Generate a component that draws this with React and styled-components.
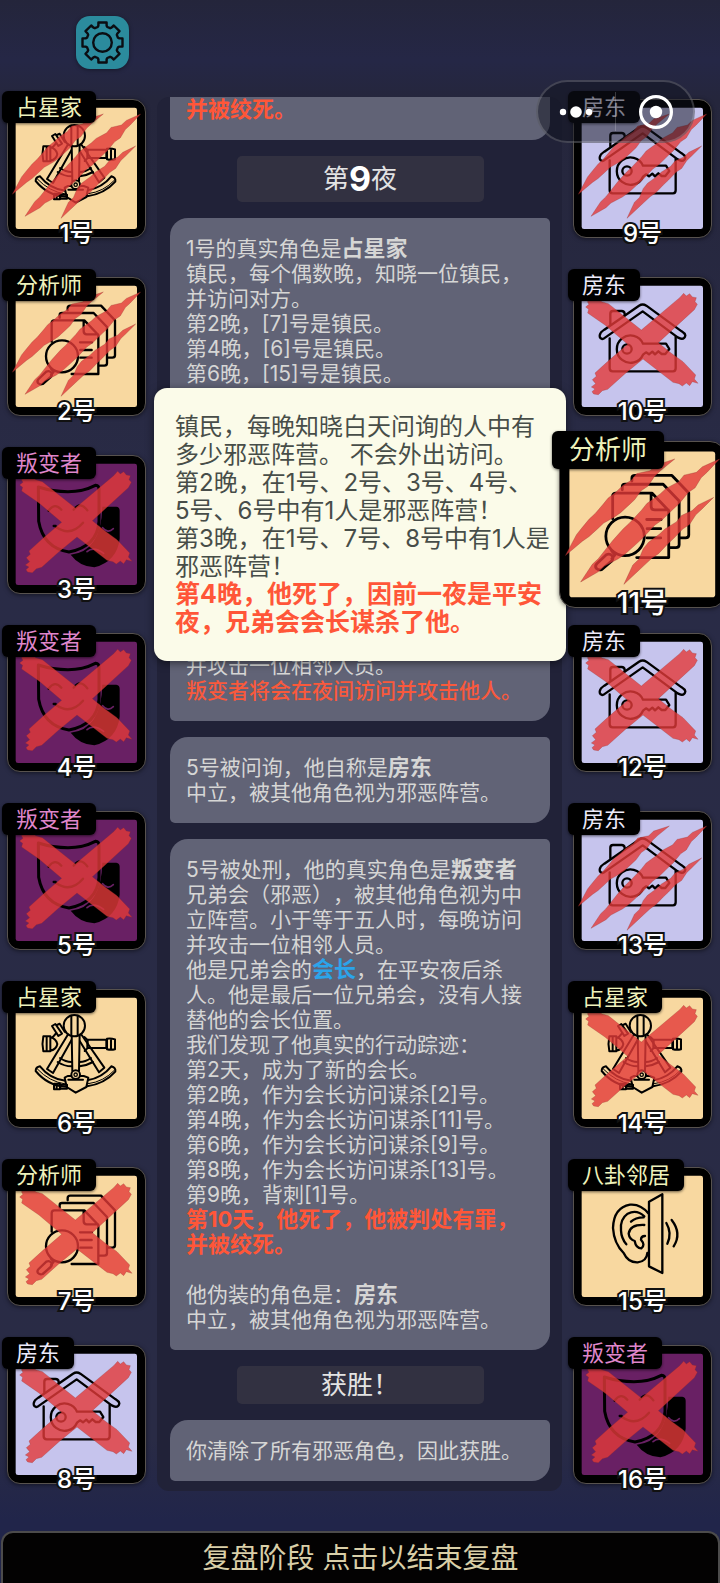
import React from "react";
import styled, { createGlobalStyle } from "styled-components";

const GlobalStyle = createGlobalStyle`
  * { box-sizing: border-box; }
  body {
    margin: 0;
    background: #25273f;
    font-family: Inter, "Noto Sans CJK SC", sans-serif;
    text-spacing-trim: space-all;
  }
  button { font: inherit; color: inherit; border: 0; padding: 0; cursor: pointer; }
`;

const Page = styled.div`
  position: relative;
  display: flex;
  flex-direction: column;
  min-height: 100vh;
  overflow: hidden;
  background: linear-gradient(#24253b 0, #252746 60px, #25263c 100px, #292b46 500px, #292b45 1440px, #21254a 1520px);
`;

const TopBar = styled.header`
  display: flex;
  height: 97px;
  padding: 16px 76px;
`;

const SettingsButton = styled.button`
  width: 53px;
  height: 53px;
  border-radius: 14px;
  background: #2b8b9d;
  box-shadow: 0 1px 4px rgba(0, 0, 0, 0.4);
  svg { display: block; }
`;

const Capsule = styled.div`
  position: absolute;
  z-index: 5;
  top: 80px;
  right: 25px;
  display: flex;
  width: 159px;
  height: 63px;
  border: 2px solid rgba(255, 255, 255, 0.18);
  border-radius: 32px;
  background: rgba(16, 18, 30, 0.5);
`;

const CapsuleButton = styled.button`
  flex: 1;
  display: flex;
  align-items: center;
  justify-content: center;
  background: none;
`;

const CapsuleDivider = styled.span`
  width: 1px;
  margin: 10px 0;
  background: rgba(255, 255, 255, 0.2);
`;

const Board = styled.main`
  flex: 1;
  display: grid;
  grid-template-columns: 139px minmax(0, 1fr) 139px;
  align-items: start;
  column-gap: 11px;
  padding: 0 8px 38px 7px;
`;

const PlayerColumn = styled.ul`
  display: flex;
  flex-direction: column;
  gap: 39px;
  margin: 2px 0 0;
  padding: 0;
  list-style: none;
`;

const PlayerSlot = styled.li`
  position: relative;
  z-index: ${(p) => (p.$selected ? 4 : 1)};
  height: 139px;
`;

const PlayerCard = styled.button`
  position: relative;
  display: block;
  width: ${(p) => (p.$selected ? 167 : 139)}px;
  height: ${(p) => (p.$selected ? 167 : 139)}px;
  margin: ${(p) => (p.$selected ? "-14px" : "0")};
  border: 1px solid #57524e;
  border-radius: ${(p) => (p.$selected ? 16 : 13)}px;
  background: #000;
  box-shadow: 0 1px 4px rgba(0, 0, 0, 0.5);
  svg {
    position: absolute;
    inset: -1px;
    width: calc(100% + 2px);
    height: calc(100% + 2px);
    overflow: visible;
  }
`;

const RoleTag = styled.span`
  position: absolute;
  top: ${(p) => (p.$selected ? -11 : -9)}px;
  left: ${(p) => (p.$selected ? -8 : -6)}px;
  padding: 0 ${(p) => (p.$selected ? 17 : 14)}px;
  border-radius: 6px;
  background: #000;
  box-shadow: 0 1px 3px rgba(0, 0, 0, 0.6);
  color: ${(p) => p.$color};
  font-size: ${(p) => (p.$selected ? 26 : 22)}px;
  line-height: ${(p) => (p.$selected ? 38 : 32)}px;
  white-space: nowrap;
`;

const SeatNumber = styled.span`
  position: absolute;
  right: 0;
  bottom: ${(p) => (p.$selected ? -12 : -13)}px;
  left: 0;
  color: #fff;
  font-size: ${(p) => (p.$selected ? 28 : 24)}px;
  font-weight: 500;
  line-height: 32px;
  text-align: center;
  -webkit-text-stroke: 4px #111;
  paint-order: stroke fill;
`;

const Center = styled.section`
  position: relative;
  z-index: 2;
  min-width: 0;
`;

const Log = styled.div`
  display: flex;
  flex-direction: column;
  align-items: stretch;
  gap: 16px;
  overflow: hidden;
  padding: 0 12px 10px 13px;
  border-radius: 12px;
  background: #212238;
`;

const LogCard = styled.article`
  margin: 0;
  padding: 18px 0 18px 16px;
  border-radius: 18px 5px;
  background: #616376;
  color: #d6d6d5;
  font-size: 21px;
  line-height: 25px;
  white-space: pre-line;
`;

const ScrolledCard = styled(LogCard)`
  padding-top: 0;
  border-radius: 0 0 18px 5px;
`;

const CoveredTopCard = styled(LogCard)`
  display: flex;
  flex-direction: column;
  justify-content: flex-end;
  min-height: 188px;
`;

const CoveredBottomCard = styled(LogCard)`
  min-height: 299px;
`;

const Banner = styled.h2`
  align-self: center;
  width: 65%;
  margin: 0;
  border-radius: 5px;
  background: #323141;
  color: #e3e3e3;
  font-size: 26px;
  font-weight: 400;
  line-height: 38px;
  text-align: center;
`;

const NightBanner = styled(Banner)`
  line-height: 46px;
`;

const NightNumber = styled.strong`
  color: #fff;
  font-size: 34px;
  font-weight: 700;
  line-height: 32px;
  vertical-align: -3px;
`;

const Strong = styled.strong`
  color: ${(p) => p.$color || "inherit"};
  font-size: ${(p) => p.$size || 22}px;
  font-weight: 700;
  line-height: 24px;
`;

const Warning = styled.span`
  color: #f9593c;
  font-weight: 500;
`;

const Popup = styled.aside`
  position: absolute;
  z-index: 3;
  top: 291px;
  right: -4px;
  left: -3px;
  padding: 25px 0 24px 21px;
  border-radius: 13px;
  background: #fbfbe9;
  box-shadow: 0 2px 8px rgba(0, 0, 0, 0.5);
  color: #474d48;
  font-size: 24px;
  line-height: 28px;
  white-space: pre-line;
`;

const FinishButton = styled.button`
  height: 52px;
  margin-left: 1px;
  border: 2px solid #4c4b4b;
  border-bottom: 0;
  border-radius: 12px 12px 0 0;
  background: #030202;
  color: #d9cfa8;
  font-size: 28px;
  line-height: 46px;
`;

const RED = "#ff5638";

/* Artwork is drawn on a 417-unit square that spans the whole card frame. */

function Sextant() {
  return (
    <g transform="translate(-22 4)" strokeWidth="6">
      <path d="M204 134 142 236l18 12 56-100M246 134l68 98-16 14-58-94" />
      <path d="M181 203q17 12 35 12M174 215q20 13 42 13M240 215q17 0 34-12M240 228q20-2 40-13" />
      <path fill="#f8d8a0" d="M216 130h24l-2 112h-20z" />
      <circle cx="224" cy="106" r="32" fill="#f8d8a0" />
      <path d="M215 76v58M234 76v58" />
      <path d="M121 228q-13 2-13 14 36 44 90 47M121 228q30 38 76 43" />
      <path strokeWidth="3" d="M113 236q36 38 84 45M344 240q-32 34-78 40" />
      <path d="M335 228q14 4 12 16-33 37-85 44M335 228q-27 34-72 42" />
      <path fill="#f8d8a0" d="M204 257h48l14 5-6 28-32 17-27-17-6-28z" />
      <path d="M206 268h44" />
      <circle cx="228" cy="253" r="13" fill="#f8d8a0" />
      <circle cx="228" cy="253" r="5" strokeWidth="4" />
      <path d="M264 148h56v25h-56zM322 145q12-2 24 2v30q-12 3-24 0zM334 146v32M254 140l9 8v26l-8 8" />
      <path d="M131 138h21v45h-21q-5-22 0-45zM141 140v42M153 141q15 3 20 20-3 16-20 20M158 142l12-14" />
      <path d="m157 107 10-6 20 29-11 7zM172 104l8-4 15 24" />
      <path d="M163 280h18v17h-18zM182 283h20v12h-20zM171 281v16" />
    </g>
  );
}

function Files() {
  return (
    <g transform="translate(-22 -52)">
      <path d="M156 246v-56q0-8 8-8h90l42 44v117h-80M252 184v31q0 9 9 9h34" />
      <path d="M180 174v-8q0-6 7-6h95l40 42v109q0 7-8 7h-14" />
      <path d="M204 152v-7q0-7 8-7h92l42 44v105q0 7-8 7h-13" />
      <path d="M241 248h36M242 271h34M242 294h34" />
      <circle cx="187" cy="290" r="48" />
      <path d="m154 327 8 9-8 10M117 358l23-22q9-4 15 3 4 7-2 13l-24 21q-8 3-14-3-4-6 2-12z" />
    </g>
  );
}

function House() {
  return (
    <g transform="translate(-72 -640)">
      <path d="m164 825-5 1q-11-5-5-16 1-4 12-12l104-72q11-7 22 0l106 77q10 6 11 12-2 12-14 10l-9-4-105-78z" />
      <path d="M184 782v-32q0-8 8-8h26q8 0 9 8v5M182 824v90q0 9 9 9h181q8 0 8-9v-94" />
      <path d="M282 840a41 41 0 1 0 0 33l9-7 9 6 10-8 8 8 10-9 10 8h11l12-15-10-16z" />
      <circle cx="234" cy="856" r="14" />
    </g>
  );
}

function Masks() {
  return (
    <g transform="translate(-22 -585)">
      <path fill="#000" stroke="none" d="M308 740h42q10 1 10 12v84q-8 68-76 86-45-3-71-38 92-10 95-144z" />
      <path strokeWidth="9" d="M116 681q44 14 89 14t82-19q12-1 11 14v94q-5 75-90 92-77-12-91-92l-1-101" />
      <path d="M147 752q18-26 38-3M222 749q20-27 41 2M162 798h6M170 802q43 29 80-14" />
      <path stroke="#692064" strokeWidth="5" d="M309 803q15 19 32 3M262 875q19-18 50 5" />
    </g>
  );
}

function Ear() {
  return (
    <g transform="translate(-42 -48)">
      <path d="M270 152 310 130v236l-40-20zM269 188q-24-30-56-27-49 9-51 70 3 47 32 75 13 29 42 28 27-3 29-28" />
      <path d="M256 196q-23-22-50-8-24 17-20 51 1 23 16 41M216 212q13-13 38-13M256 222q-43-2-47 26 2 17 18 22 4 22 20 22 13-10-1-26 0-11 12-11" />
      <path d="M322 216q18 31 3 62M338 207q31 40 6 79" />
    </g>
  );
}

const art = { 占星家: Sextant, 分析师: Files, 房东: House, 叛变者: Masks, 八卦邻居: Ear };

const palette = {
  town: { fill: "#f8d8a0", tag: "#eef2bb" },
  neutral: { fill: "#c6c4ed", tag: "#eceafa" },
  evil: { fill: "#692064", tag: "#df86ca" },
};

function Cross() {
  return (
    <path
      transform="translate(-72 -640)"
      d="M110 730 120 722 115 714 126 707 138 709 146 701 158 714 178 720 277 799 392 702 404 689 412 697 422 690 430 700 442 702 438 714 445 722 436 738 328 837 366 868 402 894 440 934 436 946 447 959 430 954 422 966 412 958 400 967 390 960 372 956 282 886 228 930 176 977 160 981 148 993 134 991 129 984 138 976 127 970 140 960 130 948 142 938 138 928 180 890 236 842 168 784 116 748 119 737Z"
    />
  );
}

/* Each slash is a centre line of [x, y, half width], torn along both edges. */
const slashes = [
  [[311, 97, 0], [262, 126, 11], [222, 156, 20], [188, 188, 25], [152, 220, 23], [115, 252, 18], [80, 287, 13], [38, 338, 0]],
  [[423, 97, 0], [378, 130, 11], [340, 160, 20], [298, 196, 27], [252, 236, 27], [206, 283, 27], [164, 324, 22], [120, 362, 14], [76, 404, 0]],
  [[408, 193, 0], [366, 224, 9], [330, 256, 14], [290, 290, 18], [250, 326, 18], [220, 362, 12], [184, 410, 0]],
];

function tornEdge(line, side) {
  return line.flatMap(([x, y, w], i) => {
    if (w === 0) return [[x, y]];
    const jag = i % 2 === 0 ? 1 : -2;
    const first = [x + side * 0.66 * (w + jag) + 8, y + side * 0.75 * (w + jag) - 7];
    const second = [x + side * 0.66 * (w - 2) - 7, y + side * 0.75 * (w - 2) + 7];
    return [first, second];
  });
}

const clawPath = slashes
  .map((line) => [...tornEdge(line, -1), ...tornEdge(line, 1).reverse()])
  .map((points) => `M${points.map(([x, y]) => `${x.toFixed(1)} ${y.toFixed(1)}`).join("L")}Z`)
  .join("");

function Claws() {
  return <path transform="translate(-22 -52)" d={clawPath} />;
}

function Player({ seat, role, camp, mark, selected }) {
  const Art = art[role];
  const { fill, tag } = palette[camp];
  return (
    <PlayerSlot $selected={selected}>
      <PlayerCard type="button" $selected={selected}>
        <svg viewBox="0 0 417 417" aria-hidden="true">
          <rect x="26" y="26" width="364" height="364" rx="7" fill={fill} />
          <g fill="none" stroke="#000" strokeWidth="7" strokeLinecap="round" strokeLinejoin="round">
            <Art />
          </g>
          <g fill="#e23a38" fillOpacity="0.8" stroke="#8d2f28" strokeOpacity="0.4" strokeWidth="2">
            {mark === "cross" && <Cross />}
            {mark === "claws" && <Claws />}
          </g>
        </svg>
        <RoleTag $color={tag} $selected={selected}>{role}</RoleTag>
        <SeatNumber $selected={selected}>{seat}号</SeatNumber>
      </PlayerCard>
    </PlayerSlot>
  );
}

const leftPlayers = [
  { seat: 1, role: "占星家", camp: "town", mark: "claws" },
  { seat: 2, role: "分析师", camp: "town", mark: "claws" },
  { seat: 3, role: "叛变者", camp: "evil", mark: "cross" },
  { seat: 4, role: "叛变者", camp: "evil", mark: "cross" },
  { seat: 5, role: "叛变者", camp: "evil", mark: "cross" },
  { seat: 6, role: "占星家", camp: "town" },
  { seat: 7, role: "分析师", camp: "town", mark: "cross" },
  { seat: 8, role: "房东", camp: "neutral", mark: "cross" },
];

const rightPlayers = [
  { seat: 9, role: "房东", camp: "neutral", mark: "claws" },
  { seat: 10, role: "房东", camp: "neutral", mark: "cross" },
  { seat: 11, role: "分析师", camp: "town", mark: "claws", selected: true },
  { seat: 12, role: "房东", camp: "neutral", mark: "cross" },
  { seat: 13, role: "房东", camp: "neutral", mark: "claws" },
  { seat: 14, role: "占星家", camp: "town", mark: "cross" },
  { seat: 15, role: "八卦邻居", camp: "town" },
  { seat: 16, role: "叛变者", camp: "evil", mark: "cross" },
];

const gearPath = (() => {
  const points = [];
  for (let i = 0; i < 8; i += 1) {
    const a = (i * Math.PI) / 4 - Math.PI / 2;
    [[-0.3, 16.2], [-0.24, 17.4], [-0.2, 20.4], [0.2, 20.4], [0.24, 17.4], [0.3, 16.2]].forEach(([d, r]) => {
      points.push(`${(26.5 + r * Math.cos(a + d)).toFixed(1)} ${(26.5 + r * Math.sin(a + d)).toFixed(1)}`);
    });
  }
  return `M${points.join("L")}Z`;
})();

export default function App() {
  return (
    <Page>
      <GlobalStyle />
      <TopBar>
        <SettingsButton type="button" aria-label="设置">
          <svg width="53" height="53" viewBox="0 0 53 53" fill="none" stroke="#0b0d12" strokeWidth="2.4" strokeLinejoin="round">
            <path d={gearPath} />
            <circle cx="26.5" cy="26.5" r="9.3" />
          </svg>
        </SettingsButton>
      </TopBar>
      <Capsule>
        <CapsuleButton type="button" aria-label="更多">
          <svg width="36" height="14" viewBox="0 0 36 14" fill="#fff">
            <circle cx="4" cy="7" r="3.2" />
            <circle cx="17" cy="7" r="5.8" />
            <circle cx="30" cy="7" r="3.2" />
          </svg>
        </CapsuleButton>
        <CapsuleDivider />
        <CapsuleButton type="button" aria-label="关闭">
          <svg width="36" height="36" viewBox="0 0 36 36" fill="none" stroke="#fff" strokeWidth="3.2">
            <circle cx="19" cy="18" r="15.4" />
            <circle cx="19" cy="18" r="6.2" fill="#fff" stroke="none" />
          </svg>
        </CapsuleButton>
      </Capsule>

      <Board>
        <PlayerColumn>
          {leftPlayers.map((p) => <Player key={p.seat} {...p} />)}
        </PlayerColumn>

        <Center>
          <Log>
            <ScrolledCard><Strong $color={RED}>并被绞死。</Strong></ScrolledCard>
            <NightBanner>第<NightNumber>9</NightNumber>夜</NightBanner>
            <CoveredBottomCard>
              1号的真实角色是<Strong>占星家</Strong>
              {"\n镇民，每个偶数晚，知晓一位镇民，\n并访问对方。\n第2晚，[7]号是镇民。\n第4晚，[6]号是镇民。\n第6晚，[15]号是镇民。"}
            </CoveredBottomCard>
            <CoveredTopCard>
              <span>并攻击一位相邻人员。</span>
              <Warning>叛变者将会在夜间访问并攻击他人。</Warning>
            </CoveredTopCard>
            <LogCard>
              5号被问询，他自称是<Strong>房东</Strong>
              {"\n中立，被其他角色视为邪恶阵营。"}
            </LogCard>
            <LogCard>
              5号被处刑，他的真实角色是<Strong>叛变者</Strong>
              {"\n兄弟会（邪恶），被其他角色视为中\n立阵营。小于等于五人时，每晚访问\n并攻击一位相邻人员。\n他是兄弟会的"}
              <Strong $color="#2ca4ea">会长</Strong>
              {"，在平安夜后杀\n人。他是最后一位兄弟会，没有人接\n替他的会长位置。\n我们发现了他真实的行动踪迹：\n第2天，成为了新的会长。\n第2晚，作为会长访问谋杀[2]号。\n第4晚，作为会长访问谋杀[11]号。\n第6晚，作为会长访问谋杀[9]号。\n第8晚，作为会长访问谋杀[13]号。\n第9晚，背刺[1]号。\n"}
              <Strong $color={RED}>{"第10天，他死了，他被判处有罪，\n并被绞死。"}</Strong>
              {"\n\n他伪装的角色是："}
              <Strong>房东</Strong>
              {"\n中立，被其他角色视为邪恶阵营。"}
            </LogCard>
            <Banner>获胜！</Banner>
            <LogCard>你清除了所有邪恶角色，因此获胜。</LogCard>
          </Log>

          <Popup>
            {"镇民，每晚知晓白天问询的人中有\n多少邪恶阵营。 不会外出访问。\n第2晚，在1号、2号、3号、4号、\n5号、6号中有1人是邪恶阵营！\n第3晚，在1号、7号、8号中有1人是\n邪恶阵营！\n"}
            <Strong $color={RED} $size={25}>{"第4晚，他死了，因前一夜是平安\n夜，兄弟会会长谋杀了他。"}</Strong>
          </Popup>
        </Center>

        <PlayerColumn>
          {rightPlayers.map((p) => <Player key={p.seat} {...p} />)}
        </PlayerColumn>
      </Board>

      <FinishButton type="button">复盘阶段 点击以结束复盘</FinishButton>
    </Page>
  );
}
